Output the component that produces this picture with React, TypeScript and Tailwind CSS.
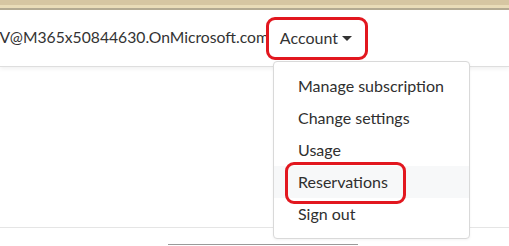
export default function App() {
  const items = ["Manage subscription", "Change settings", "Usage", "Reservations", "Sign out"];
  return (
    <div className="relative w-[509px] h-[246px] overflow-hidden bg-white text-[#2f2f2f] font-['Lato',sans-serif]">
      {/* window chrome strip */}
      <div className="h-[10px] flex flex-col">
        <div className="h-[5px] bg-[#d6c6a2]" />
        <div className="h-[3px] bg-[#e9dcb8]" />
        <div className="h-[2px] bg-[#b3aa92]" />
      </div>

      {/* navbar */}
      <nav className="h-[57px] flex items-center justify-end pr-[157px] border-b border-[#dedede] shadow-[0_2px_4px_rgba(0,0,0,0.06)]">
        <span className="shrink-0 whitespace-nowrap text-[15.7px] text-[#333]">V@M365x50844630.OnMicrosoft.com</span>
        <button className="shrink-0 ml-[11px] flex items-center text-[16px] text-[#333]">
          Account
          <span className="ml-[4px] mt-[1px] w-0 h-0 border-x-[5px] border-x-transparent border-t-[5px] border-t-[#333]" />
        </button>
      </nav>

      {/* page content edges */}
      <div className="mt-[160px] border-t border-[#e5e5e5]" />
      <div className="mt-[16px] ml-[168px] w-[190px] border-t border-[#9a9a9a]" />

      {/* dropdown menu */}
      <div className="absolute left-[273px] top-[61px] w-[197px] py-[8px] bg-white border border-[#d9d9d9] rounded-[4px] shadow-[0_1px_3px_rgba(0,0,0,0.05)]">
        {items.map((t) => (
          <div
            key={t}
            className={`h-[32px] flex items-center px-6 whitespace-nowrap text-[16px] ${t === "Reservations" ? "bg-[#f7f8f9]" : ""}`}
          >
            {t}
          </div>
        ))}
      </div>

      {/* annotation marks */}
      <div className="absolute left-[266px] top-[17px] w-[102px] h-[43px] border-[3px] border-[#e2171f] rounded-[9px]" />
      <div className="absolute left-[285px] top-[162px] w-[121px] h-[42px] border-[3px] border-[#e2171f] rounded-[9px]" />
    </div>
  );
}
